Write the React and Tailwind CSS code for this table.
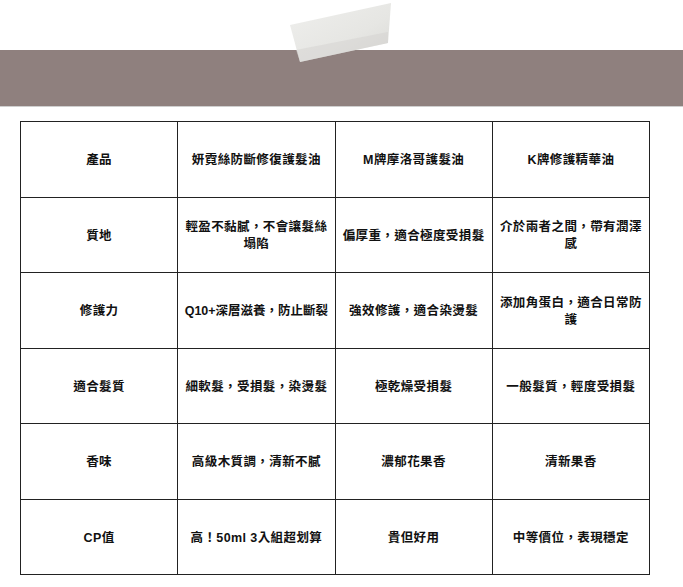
import React from 'react';

const rows = [
  ['產品', '妍霓絲防斷修復護髮油', 'M牌摩洛哥護髮油', 'K牌修護精華油'],
  ['質地', '輕盈不黏膩，不會讓髮絲塌陷', '偏厚重，適合極度受損髮', '介於兩者之間，帶有潤澤感'],
  ['修護力', 'Q10+深層滋養，防止斷裂', '強效修護，適合染燙髮', '添加角蛋白，適合日常防護'],
  ['適合髮質', '細軟髮，受損髮，染燙髮', '極乾燥受損髮', '一般髮質，輕度受損髮'],
  ['香味', '高級木質調，清新不膩', '濃郁花果香', '清新果香'],
  ['CP值', '高！50ml 3入組超划算', '貴但好用', '中等價位，表現穩定'],
];

// masking tape strip over the band
function Tape() {
  return (
    <svg className="absolute left-[288px] top-[2px]" width="106" height="62" viewBox="0 0 106 62">
      <defs>
        <linearGradient id="tape" x1="0" y1="0" x2="1" y2="1">
          <stop offset="0" stopColor="#efefed" />
          <stop offset="0.6" stopColor="#e6e6e3" />
          <stop offset="1" stopColor="#d9d9d5" />
        </linearGradient>
      </defs>
      <polygon points="2,23 103,1 100,41 12,60" fill="url(#tape)" />
      <polygon points="8,48 100,30 100,41 12,60" fill="#d4d2cf" opacity="0.5" />
    </svg>
  );
}

export default function App() {
  return (
    <div className="relative w-[683px] h-[587px] bg-white overflow-hidden" style={{ fontFamily: '"Liberation Sans", "Noto Sans CJK TC", sans-serif' }}>
      <div className="h-[50px]" />
      <div className="h-[57px] bg-[#8f807e] border-b border-[#cfcfcf]" />
      <Tape />

      <div className="pt-[14px] pl-[20px]">
        <table className="w-[630px] table-fixed border-collapse">
          <tbody>
            {rows.map((r, i) => (
              <tr key={i} className="h-[75.5px]">
                {r.map((c, j) => (
                  <td
                    key={j}
                    className={
                      'border-[1.5px] border-[#222] px-[4px] pt-[3px] text-center align-middle text-[12.5px] leading-[17px] font-bold text-[#111] ' +
                      (i === 2 && j === 1 ? 'tracking-[0px] whitespace-nowrap' : 'tracking-[0.4px]')
                    }
                  >
                    {c}
                  </td>
                ))}
              </tr>
            ))}
          </tbody>
        </table>
      </div>
    </div>
  );
}
